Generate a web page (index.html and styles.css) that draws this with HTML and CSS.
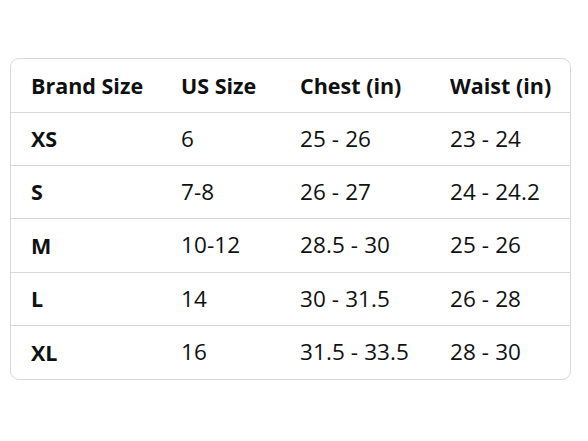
FILE: index.html
```html
<!DOCTYPE html>
<html>
<head>
<meta charset="utf-8">
<link rel="stylesheet" href="styles.css">
</head>
<body>
<div class="card">
  <table class="sizes">
    <thead>
      <tr><th class="c1">Brand Size</th><th class="c2">US Size</th><th class="c3">Chest (in)</th><th class="c4">Waist (in)</th></tr>
    </thead>
    <tbody>
      <tr><th>XS</th><td>6</td><td>25 - 26</td><td>23 - 24</td></tr>
      <tr><th>S</th><td>7-8</td><td>26 - 27</td><td>24 - 24.2</td></tr>
      <tr><th>M</th><td>10-12</td><td>28.5 - 30</td><td>25 - 26</td></tr>
      <tr><th>L</th><td>14</td><td>30 - 31.5</td><td>26 - 28</td></tr>
      <tr><th>XL</th><td>16</td><td>31.5 - 33.5</td><td>28 - 30</td></tr>
    </tbody>
  </table>
</div>
</body>
</html>
```
FILE: styles.css
```css
html, body {
  margin: 0;
  padding: 0;
  background: #ffffff;
}
body {
  font-family: "Open Sans", "Noto Sans", sans-serif;
  color: #0f1111;
  padding: 58px 17px 0 10px;
}
.card {
  border: 1.5px solid #d5d9d9;
  border-radius: 9px;
  overflow: hidden;
}
.sizes {
  width: 100%;
  border-collapse: collapse;
  table-layout: fixed;
}
.sizes th, .sizes td {
  box-sizing: border-box;
  height: 53.3px;
  padding: 0 0 0 20px;
  text-align: left;
  font-size: 21.5px;
  line-height: 1;
  vertical-align: middle;
  white-space: nowrap;
}
.sizes th {
  font-weight: 700;
}
.sizes td {
  font-weight: 400;
  font-size: 22.5px;
  letter-spacing: 0.1px;
}
.sizes tbody tr th, .sizes tbody tr td {
  border-top: 1.5px solid #d5d9d9;
}
.c1 { width: 150px; }
.c2 { width: 119px; }
.c3 { width: 150px; }
```
